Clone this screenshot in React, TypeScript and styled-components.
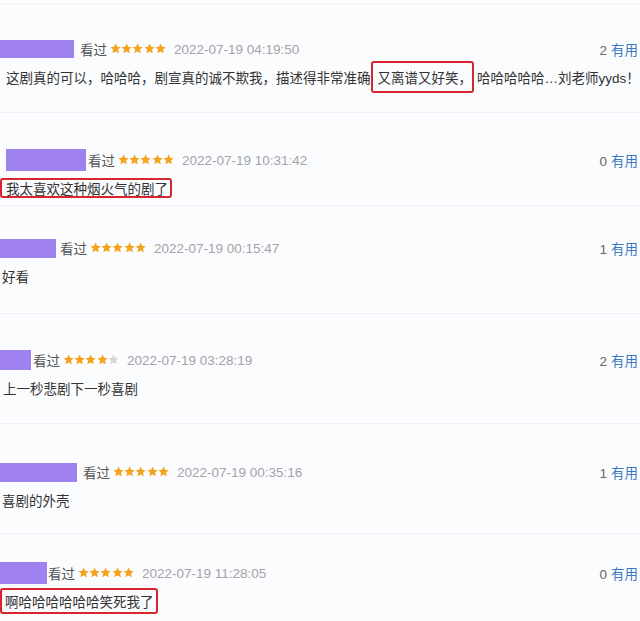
import React, { FC } from "react";
import styled, { createGlobalStyle } from "styled-components";

const GlobalStyle = createGlobalStyle`
  html, body {
    margin: 0;
    padding: 0;
    background: #fbfcfe;
  }
  body {
    font-family: "Liberation Sans", "Noto Sans CJK SC", sans-serif;
  }
`;

interface IReview {
  top: number;
  height?: number;
  nameLeft: number;
  nameWidth: number;
  nameHeight: number;
  nameGap: number;
  stars: number;
  date: string;
  useful: number;
  children: React.ReactNode;
}

const reviews: Omit<IReview, "children">[] = [
  { top: 35, height: 109, nameLeft: 0, nameWidth: 74, nameHeight: 18, nameGap: 6, stars: 5, date: "2022-07-19 04:19:50", useful: 2 },
  { top: 37, height: 93, nameLeft: 6, nameWidth: 80, nameHeight: 22, nameGap: 2, stars: 5, date: "2022-07-19 10:31:42", useful: 0 },
  { top: 32, height: 108, nameLeft: 0, nameWidth: 56, nameHeight: 19, nameGap: 4, stars: 5, date: "2022-07-19 00:15:47", useful: 1 },
  { top: 36, height: 110, nameLeft: 0, nameWidth: 31, nameHeight: 20, nameGap: 2, stars: 4, date: "2022-07-19 03:28:19", useful: 2 },
  { top: 38, height: 110, nameLeft: 0, nameWidth: 77, nameHeight: 19, nameGap: 6, stars: 5, date: "2022-07-19 00:35:16", useful: 1 },
  { top: 29, nameLeft: 0, nameWidth: 47, nameHeight: 22, nameGap: 1, stars: 5, date: "2022-07-19 11:28:05", useful: 0 },
];

const Star: FC<{ on: boolean }> = ({ on }) => (
  <svg width="11.2" height="11.2" viewBox="0 0 24 24">
    <polygon
      points="12,1 15.4,8.2 23,9 17.3,14.2 18.9,22 12,18 5.1,22 6.7,14.2 1,9 8.6,8.2"
      fill={on ? "#f5a422" : "#d6d6d9"}
    />
  </svg>
);

const Review: FC<IReview> = ({
  top,
  height,
  nameLeft,
  nameWidth,
  nameHeight,
  nameGap,
  stars,
  date,
  useful,
  children,
}) => (
  <Item $top={top} $height={height}>
    <Header>
      <Name $left={nameLeft} $w={nameWidth} $h={nameHeight} $gap={nameGap} />
      <Watched>看过</Watched>
      <Stars>
        {[0, 1, 2, 3, 4].map((i) => (
          <Star key={i} on={i < stars} />
        ))}
      </Stars>
      <DateText>{date}</DateText>
      <Useful>
        <Count>{useful}</Count>
        <UsefulLink>有用</UsefulLink>
      </Useful>
    </Header>
    {children}
  </Item>
);

export default function App() {
  return (
    <>
      <GlobalStyle />
      <Page>
        <Review {...reviews[0]}>
          <Comment $left={6}>
            这剧真的可以，哈哈哈，剧宣真的诚不欺我，描述得非常准确
            <Highlight $padL={5} $padR={5} $height={32} $after={3}>
              又离谱又好笑<Comma>，</Comma>
            </Highlight>
            哈哈哈哈哈…刘老师yyds！
          </Comment>
        </Review>
        <Review {...reviews[1]}>
          <Comment $left={0}>
            <Highlight $padL={4} $padR={2} $height={20} $after={0}>
              我太喜欢这种烟火气的剧了
            </Highlight>
          </Comment>
        </Review>
        <Review {...reviews[2]}>
          <Comment $left={2}>好看</Comment>
        </Review>
        <Review {...reviews[3]}>
          <Comment $left={3}>上一秒悲剧下一秒喜剧</Comment>
        </Review>
        <Review {...reviews[4]}>
          <Comment $left={2}>喜剧的外壳</Comment>
        </Review>
        <Review {...reviews[5]}>
          <Comment $left={0}>
            <Highlight $padL={3} $padR={2} $height={26} $after={0}>
              啊哈哈哈哈哈哈笑死我了
            </Highlight>
          </Comment>
        </Review>
      </Page>
    </>
  );
}

const Page = styled.div`
  width: 640px;
  height: 621px;
  overflow: hidden;
  background: #fbfcfe;
  border-top: 1px solid #f1f2f6;
  margin-top: 3px;
  box-sizing: border-box;
`;

const Item = styled.div<{ $top: number; $height?: number }>`
  padding: ${(p) => p.$top}px 2px 0 0;
  height: ${(p) => (p.$height ? `${p.$height}px` : "auto")};
  box-sizing: border-box;
  border-bottom: 1px solid #eff0f5;
  &:last-child {
    border-bottom: none;
  }
`;

const Header = styled.div`
  display: flex;
  align-items: center;
  height: 20px;
`;

const Name = styled.div<{ $left: number; $w: number; $h: number; $gap: number }>`
  flex: none;
  width: ${(p) => p.$w}px;
  height: ${(p) => p.$h}px;
  margin-left: ${(p) => p.$left}px;
  margin-right: ${(p) => p.$gap}px;
  background: #9f82f0;
`;

const Watched = styled.span`
  font-size: 13.5px;
  color: #555;
  margin-right: 3px;
  white-space: nowrap;
`;

const Stars = styled.span`
  display: inline-flex;
  margin-right: 8px;
`;

const DateText = styled.span`
  font-size: 13.5px;
  color: #a3a3a8;
  white-space: nowrap;
`;

const Useful = styled.span`
  margin-left: auto;
  font-size: 13.5px;
  white-space: nowrap;
`;

const Count = styled.span`
  color: #666;
  margin-right: 4px;
`;

const UsefulLink = styled.span`
  color: #3b78c4;
`;

const Comment = styled.div<{ $left: number }>`
  display: flex;
  align-items: center;
  height: 20px;
  margin-top: 8px;
  padding-left: ${(p) => p.$left}px;
  font-size: 13.5px;
  color: #333;
  white-space: nowrap;
`;

const Highlight = styled.span<{ $padL: number; $padR: number; $height: number; $after: number }>`
  display: inline-flex;
  align-items: center;
  flex: none;
  height: ${(p) => p.$height}px;
  padding: 0 ${(p) => p.$padR}px 0 ${(p) => p.$padL}px;
  margin-right: ${(p) => p.$after}px;
  border: 2px solid #d7262e;
  border-radius: 3px;
  box-sizing: border-box;
`;

const Comma = styled.span`
  margin-right: -5px;
`;
